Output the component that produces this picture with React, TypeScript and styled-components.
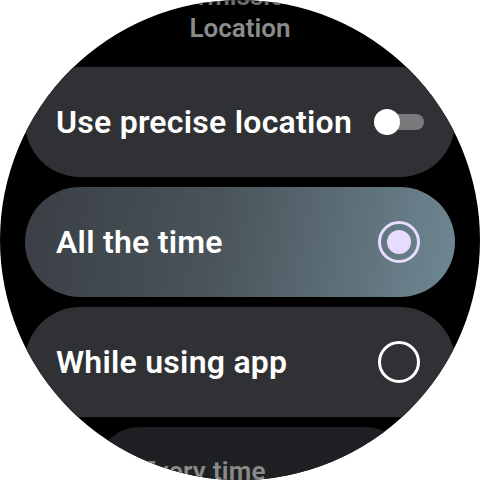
import React from "react";
import styled, { createGlobalStyle } from "styled-components";

const GlobalStyle = createGlobalStyle`
    html, body {
        margin: 0;
        padding: 0;
        background: #ffffff;
        font-family: Roboto, "Noto Sans", "Liberation Sans", sans-serif;
    }
`

const Screen = styled.div`
    width: 480px;
    height: 480px;
    border-radius: 50%;
    background: #000000;
    overflow: hidden;
    position: relative;
`

const List = styled.div`
    display: flex;
    flex-direction: column;
    gap: 10px;
    padding: 0 25px;
    margin-top: -20px;
`

const Heading = styled.div<{ $cut?: boolean }>`
    height: 32px;
    line-height: 32px;
    text-align: center;
    font-size: 26px;
    font-weight: 600;
    color: ${(props) => (props.$cut ? "#6f6f6f" : "#8b8b8b")};
`

const HeadingGroup = styled.div`
    display: flex;
    flex-direction: column;
    margin-bottom: 13px;
`

const Chip = styled.div<{ $selected?: boolean; $far?: boolean }>`
    height: ${(props) => (props.$far ? "84px" : "110px")};
    border-radius: 55px;
    display: flex;
    align-items: center;
    justify-content: space-between;
    padding: ${(props) => (props.$far ? "0 24px 0 44px" : "0 31px 0 31px")};
    margin: ${(props) => (props.$far ? "0 47px 0 72px" : "0")};
    background: ${(props) =>
        props.$selected
            ? "linear-gradient(100deg, #393e43 0%, #4a545b 45%, #6f8893 100%)"
            : props.$far
            ? "#1f2023"
            : "#303134"};
    box-sizing: border-box;
`

const Label = styled.span<{ $far?: boolean }>`
    font-size: ${(props) => (props.$far ? "26px" : "32px")};
    font-weight: 600;
    letter-spacing: 0.25px;
    color: ${(props) => (props.$far ? "#8a8a8a" : "#ffffff")};
    white-space: nowrap;
    margin-top: ${(props) => (props.$far ? "4px" : "0")};
`

const Toggle = styled.div`
    position: relative;
    width: 50px;
    height: 26px;
    display: flex;
    align-items: center;
`

const Track = styled.div`
    width: 40px;
    height: 16px;
    border-radius: 8px;
    background: #7a7a7c;
    margin-left: 10px;
`

const Thumb = styled.div`
    position: absolute;
    left: 0;
    top: 0;
    width: 26px;
    height: 26px;
    border-radius: 50%;
    background: #ffffff;
`

const Radio = styled.div<{ $checked?: boolean }>`
    width: 42px;
    height: 42px;
    border-radius: 50%;
    box-sizing: border-box;
    border: 3px solid ${(props) => (props.$checked ? "#e5dcff" : "#ffffff")};
    display: flex;
    align-items: center;
    justify-content: center;
    margin-right: 4px;
`

const Dot = styled.div`
    width: 24px;
    height: 24px;
    border-radius: 50%;
    background: #e5dcff;
`

const App = () => {
    return (
        <>
            <GlobalStyle />
            <Screen>
                <List>
                    <HeadingGroup>
                        <Heading $cut>Permissions</Heading>
                        <Heading>Location</Heading>
                    </HeadingGroup>
                    <Chip>
                        <Label>Use precise location</Label>
                        <Toggle>
                            <Track />
                            <Thumb />
                        </Toggle>
                    </Chip>
                    <Chip $selected>
                        <Label>All the time</Label>
                        <Radio $checked>
                            <Dot />
                        </Radio>
                    </Chip>
                    <Chip>
                        <Label>While using app</Label>
                        <Radio />
                    </Chip>
                    <Chip $far>
                        <Label $far>Every time</Label>
                    </Chip>
                </List>
            </Screen>
        </>
    )
}

export default App;
